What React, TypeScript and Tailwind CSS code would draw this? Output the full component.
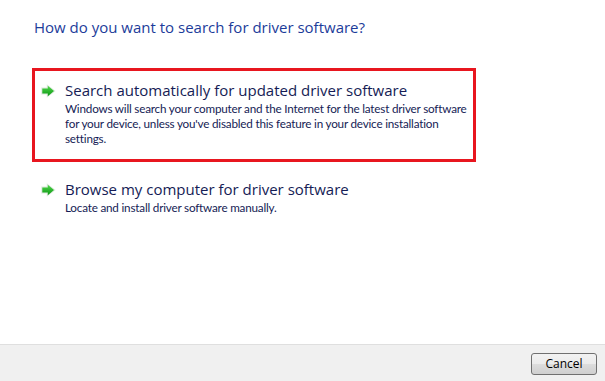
import type { ReactNode } from 'react';

const font = { fontFamily: '"Open Sans", "Noto Sans", sans-serif' };
const small = { fontFamily: 'Lato, "Open Sans", sans-serif' };

function GreenArrow() {
  return (
    <svg width="15" height="14" viewBox="0 0 15 14" className="shrink-0">
      <defs>
        <linearGradient id="ga" x1="0" y1="0" x2="0" y2="1">
          <stop offset="0" stopColor="#52d84c" />
          <stop offset="1" stopColor="#0a9612" />
        </linearGradient>
      </defs>
      <path d="M0.3 3.6 H5.8 V0.2 L14.6 7 L5.8 13.8 V10.4 H0.3 Z" fill="#dde9dd" />
      <path d="M1.3 4.6 H6.8 V1.8 L13 7 L6.8 12.2 V9.4 H1.3 Z" fill="url(#ga)" />
    </svg>
  );
}

function CommandLink({ title, children, highlighted }: { title: string; children: ReactNode; highlighted?: boolean }) {
  return (
    <div
      className={`flex w-[444px] gap-[9px] pl-[6px] ${
        highlighted ? 'border-[3px] border-[#e8161f] pb-[13px] pt-[9px]' : 'border-[3px] border-transparent pt-[9px]'
      }`}
    >
      <div className="pt-[4px]">
        <GreenArrow />
      </div>
      <div className="text-[#151c55]">
        <div className="text-[15px] leading-[20px]">{title}</div>
        <div className="mt-[1px] w-[408px] text-[11.7px] leading-[15px] tracking-[-0.2px]" style={small}>
          {children}
        </div>
      </div>
    </div>
  );
}

export default function App() {
  return (
    <div className="flex h-[381px] w-[605px] flex-col bg-white" style={font}>
      <div className="flex-1 pl-[32px] pt-[17px]">
        <div className="pl-[2px] text-[15px] leading-[20px] text-[#1c3c9a]">How do you want to search for driver software?</div>
        <div className="mt-[31px]">
          <CommandLink title="Search automatically for updated driver software" highlighted>
            Windows will search your computer and the Internet for the latest driver software for your device, unless
            you've disabled this feature in your device installation settings.
          </CommandLink>
        </div>
        <div className="mt-[5px]">
          <CommandLink title="Browse my computer for driver software">
            Locate and install driver software manually.
          </CommandLink>
        </div>
      </div>
      <div className="flex h-[37px] items-center justify-end border-t border-[#dfdfdf] bg-[#f0f0f0] pr-[8px]">
        <button className="mt-[1px] h-[22px] w-[66px] rounded-[3px] border border-[#707070] bg-[linear-gradient(180deg,#f2f2f2_0%,#ebebeb_50%,#dddddd_51%,#cfcfcf_100%)] text-[12px] leading-[20px] text-black">
          Cancel
        </button>
      </div>
    </div>
  );
}
